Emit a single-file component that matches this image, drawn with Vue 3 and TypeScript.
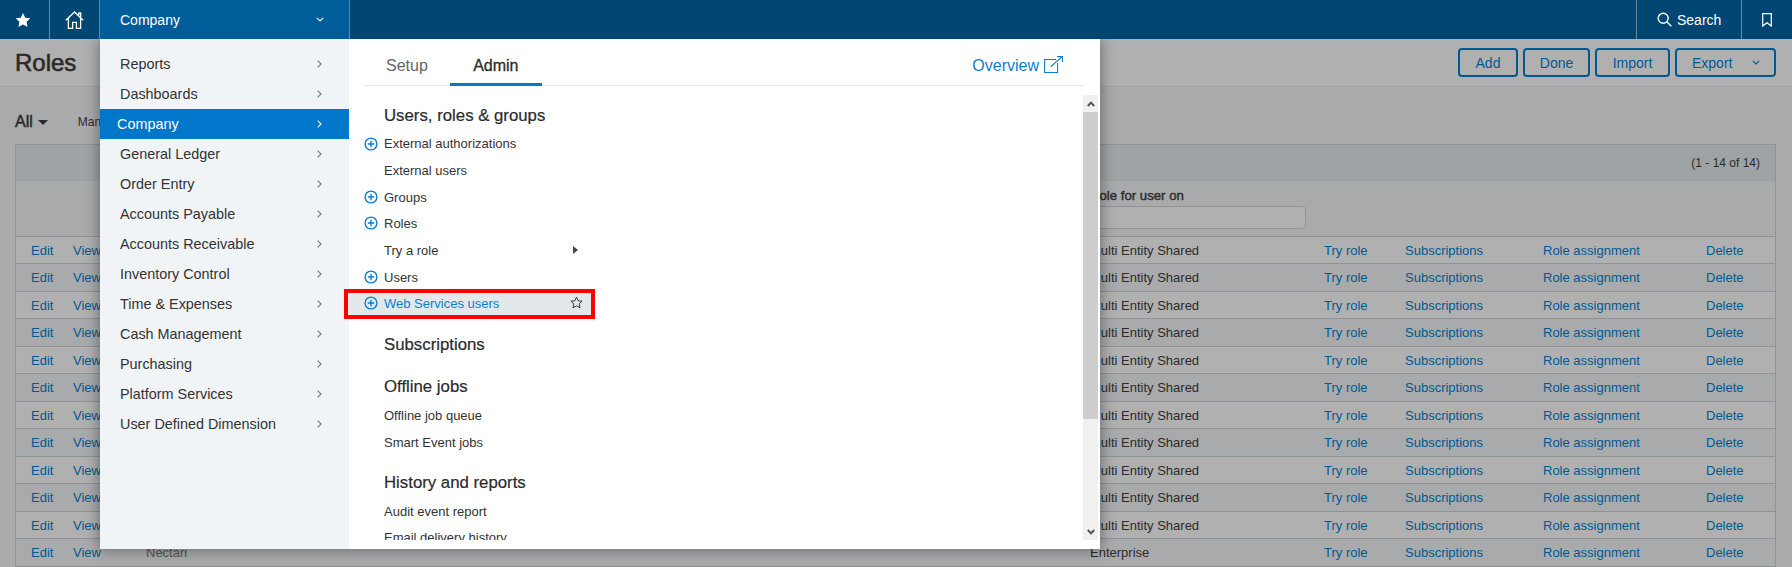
<script setup lang="ts">
const leftItems: string[] = ['Reports', 'Dashboards', 'Company', 'General Ledger', 'Order Entry', 'Accounts Payable', 'Accounts Receivable', 'Inventory Control', 'Time & Expenses', 'Cash Management', 'Purchasing', 'Platform Services', 'User Defined Dimension']
const userLinks = [
  { label: 'External authorizations', plus: true },
  { label: 'External users', plus: false },
  { label: 'Groups', plus: true },
  { label: 'Roles', plus: true },
  { label: 'Try a role', plus: false, arrow: true },
  { label: 'Users', plus: true },
]
const rows = Array.from({ length: 12 }, (_, i) => ({
  name: i === 11 ? 'Nectari' : '',
  type: i === 11 ? 'Enterprise' : 'Multi Entity Shared',
}))
</script>

<template>
  <div class="page">
    <header class="topbar">
      <a class="tb-icon tb-star" aria-label="Favorites">
        <svg width="16" height="16" viewBox="0 0 24 24"><path fill="#fff" d="M12 1.5l3.3 7 7.7 1-5.6 5.3 1.4 7.7-6.8-3.8-6.8 3.8 1.4-7.7L1 9.5l7.7-1z"/></svg>
      </a>
      <a class="tb-icon" aria-label="Home">
        <svg width="19" height="18" viewBox="0 0 19 18" fill="none" stroke="#fff" stroke-width="1.3"><path d="M.8 9.2L9.5 1l8.7 8.2M3.4 7.2v10.1h4.2v-6h3.8v6h4.2V7.2M13.8 4.2V1.8h1.9v4.2"/></svg>
      </a>
      <a class="tb-company">
        <span>Company</span>
        <svg width="8" height="5" viewBox="0 0 8 5" fill="none" stroke="#fff" stroke-width="1.2"><path d="M.8.8L4 4 7.2.8"/></svg>
      </a>
      <div class="tb-fill"></div>
      <a class="tb-search">
        <svg width="15" height="15" viewBox="0 0 15 15" fill="none" stroke="#fff" stroke-width="1.4"><circle cx="6.2" cy="6.2" r="5"/><path d="M9.8 9.8L14.3 14.3"/></svg>
        <span>Search</span>
      </a>
      <a class="tb-mark" aria-label="Bookmarks">
        <svg width="10" height="14" viewBox="0 0 10 14" fill="none" stroke="#fff" stroke-width="1.2"><path d="M.7.7h8.6v12.4L5 9.8.7 13.1z"/></svg>
      </a>
    </header>

    <section class="titlebar">
      <h1>Roles</h1>
      <div class="actions">
        <button class="btn w-add">Add</button>
        <button class="btn w-done">Done</button>
        <button class="btn w-import">Import</button>
        <button class="btn w-export">
          <span>Export</span>
          <svg width="8" height="5" viewBox="0 0 8 5" fill="none" stroke="#005a92" stroke-width="1.2"><path d="M.8.8L4 4 7.2.8"/></svg>
        </button>
      </div>
    </section>

    <section class="filters">
      <span class="all">All</span><i class="caret"></i>
      <span class="manage">Man</span>
    </section>

    <section class="grid">
      <div class="band"><span>(1 - 14 of 14)</span></div>
      <div class="heads">
        <div class="head-cell">
          <b>Role for user on</b>
          <div class="filter-input"></div>
        </div>
      </div>
      <div v-for="(r, i) in rows" :key="i" class="row" :class="{ alt: i % 2 === 1 }">
        <a>Edit</a>
        <a>View</a>
        <span class="name">{{ r.name }}</span>
        <span>{{ r.type }}</span>
        <a>Try role</a>
        <a>Subscriptions</a>
        <a>Role assignment</a>
        <a>Delete</a>
      </div>
    </section>

    <nav class="menu">
      <ul class="menu-left">
        <li v-for="item in leftItems" :key="item" :class="{ active: item === 'Company' }">
          <span>{{ item }}</span>
          <svg width="5" height="8" viewBox="0 0 5 8" fill="none" stroke="currentColor" stroke-width="1.1"><path d="M.7.7L4 4 .7 7.3"/></svg>
        </li>
      </ul>
      <div class="menu-right">
        <div class="tabs">
          <a class="tab">Setup</a>
          <a class="tab on">Admin</a>
          <a class="overview">
            <span>Overview</span>
            <svg width="19" height="17" viewBox="0 0 19 17" fill="none" stroke="#0b7ed0" stroke-width="1.1"><path d="M12 3.5H.6v13h13V7M7 10.5L18 .7M13 .6h5.4V6"/></svg>
          </a>
        </div>
        <div class="scroller">
          <div class="scroll-body">
            <h3 class="first">Users, roles &amp; groups</h3>
            <a v-for="l in userLinks" :key="l.label" class="link">
              <svg v-if="l.plus" class="plus" width="14" height="14" viewBox="0 0 14 14" fill="none" stroke="#0b7ed0" stroke-width="1.4"><circle cx="7" cy="7" r="5.9"/><path d="M3.8 7h6.4M7 3.8v6.4"/></svg>
              <span>{{ l.label }}</span>
              <i v-if="l.arrow" class="arrow"></i>
            </a>
            <a class="link hot">
              <svg class="plus" width="14" height="14" viewBox="0 0 14 14" fill="none" stroke="#0b7ed0" stroke-width="1.4"><circle cx="7" cy="7" r="5.9"/><path d="M3.8 7h6.4M7 3.8v6.4"/></svg>
              <span>Web Services users</span>
              <svg class="star" width="13" height="13" viewBox="0 0 24 24" fill="none" stroke="#333" stroke-width="1.8"><path d="M12 2l3 6.8 7.4.8-5.5 5 1.6 7.3L12 18.2l-6.5 3.7 1.6-7.3-5.5-5 7.4-.8z"/></svg>
            </a>
            <h3 class="sub">Subscriptions</h3>
            <h3 class="off">Offline jobs</h3>
            <a class="link">Offline job queue</a>
            <a class="link">Smart Event jobs</a>
            <h3 class="hist">History and reports</h3>
            <a class="link">Audit event report</a>
            <a class="link">Email delivery history</a>
          </div>
          <div class="sbar">
            <span class="sb-btn"><svg width="8" height="6" viewBox="0 0 8 6" fill="none" stroke="#555" stroke-width="2"><path d="M.8 5L4 1.6 7.2 5"/></svg></span>
            <span class="sb-thumb"></span>
            <span class="sb-track"></span>
            <span class="sb-btn"><svg width="8" height="6" viewBox="0 0 8 6" fill="none" stroke="#555" stroke-width="2"><path d="M.8 1L4 4.4 7.2 1"/></svg></span>
          </div>
        </div>
      </div>
      <div class="annotation"></div>
    </nav>
  </div>
</template>

<style>
html, body { margin: 0; background: #a9aaac; overflow: hidden; }
</style>

<style scoped>
.page {
  position: relative;
  height: 567px;
  overflow: hidden;
  font-family: "Liberation Sans", Arial, sans-serif;
  font-size: 13px;
  color: #2b2b2b;
  background: #a9aaac;
}
a { color: inherit; text-decoration: none; }
.topbar { display: flex; height: 39px; background: #004672; color: #fff; position: relative; z-index: 3; }
.tb-icon { width: 49px; display: flex; align-items: center; justify-content: center; border-right: 1px solid #5e8aa8; }
.tb-star { box-sizing: border-box; width: 50px; padding-right: 3px; }
.tb-company {
  width: 250px; padding: 0 25px 0 20px; box-sizing: border-box; display: flex; align-items: center; justify-content: space-between;
  background: #005d99; border-right: 1px solid #5e8aa8; font-size: 14px;
}
.tb-fill { flex: 1; }
.tb-search { width: 105px; box-sizing: border-box; padding-left: 20px; display: flex; align-items: center; gap: 5px; border-left: 1px solid #5e8aa8; font-size: 14px; }
.tb-mark { width: 51px; box-sizing: border-box; padding-left: 20px; display: flex; align-items: center; border-left: 1px solid #5e8aa8; }

.titlebar { height: 48px; box-sizing: border-box; border-bottom: 1px solid #9ea3a5; display: flex; align-items: center; justify-content: space-between; padding: 0 16px 0 15px; background: #b0b0b0; }
h1 { margin: 0; font-size: 24px; font-weight: 400; color: #2a2a2a; -webkit-text-stroke: .6px #2a2a2a; }
.actions { display: flex; gap: 5px; }
.btn { height: 29px; padding: 0; background: transparent; border: 2px solid #005a92; border-radius: 4px; color: #005a92; font: 14px "Liberation Sans", Arial, sans-serif; box-sizing: border-box; }
.w-add { width: 60px; }
.w-done { width: 67px; }
.w-import { width: 75px; }
.w-export { width: 101px; display: flex; align-items: center; justify-content: space-between; padding: 0 14px 0 15px; }

.filters { height: 57px; box-sizing: border-box; padding: 26px 0 0 15px; display: flex; align-items: flex-start; }
.all { font-size: 16px; line-height: 18px; -webkit-text-stroke: .5px #2a2a2a; }
.caret { width: 0; height: 0; margin: 7px 0 0 5px; border: 5px solid transparent; border-top: 5px solid #2a2a2a; border-bottom: 0; }
.manage { margin-left: 30px; font-size: 12px; line-height: 18px; }

.grid { margin: 0 16px 0 15px; border-left: 1px solid #8e9396; border-right: 1px solid #8e9396; border-top: 1px solid #8e9396; }
.band { height: 36px; background: #9ea3a5; display: flex; align-items: center; justify-content: flex-end; padding-right: 15px; font-size: 12px; }
.heads { height: 55.5px; box-sizing: border-box; border-bottom: 1px solid #8e9396; padding: 7px 0 0 1074px; }
.head-cell b { display: block; font-size: 13.2px; line-height: 16px; font-weight: 400; -webkit-text-stroke: .4px #2b2b2b; }
.filter-input { width: 216px; height: 23px; margin-top: 2px; box-sizing: border-box; border: 1px solid #909597; border-radius: 4px; background: #b0b0b0; }
.row { display: grid; grid-template-columns: 42px 58px 959px 234px 81px 138px 163px 70px; height: 27.5px; box-sizing: border-box; align-items: center; padding: 1px 0 0 15px; background: #b0b0b0; border-bottom: 1px solid #8e9396; }
.row.alt { background: #a9aaac; }
.row a { color: #005a92; }
.row .name { color: #555; padding-left: 15px; }

.menu { position: absolute; left: 100px; top: 39px; width: 1000px; height: 510px; display: flex; background: #fff; box-shadow: 0 0 14px rgba(0, 0, 0, .45); z-index: 2; }
.menu-left { width: 249px; margin: 0; padding: 10px 0 0; list-style: none; background: #f0f4f6; font-size: 14.4px; color: #333; flex: none; }
.menu-left li { height: 30px; display: flex; align-items: center; justify-content: space-between; padding: 0 27px 0 20px; color: #333; }
.menu-left li svg { color: #777; }
.menu-left li.active { background: #0077cb; color: #fff; padding-left: 17px; }
.menu-left li.active svg { color: #fff; }
.menu-right { flex: 1; display: flex; flex-direction: column; min-width: 0; }
.tabs { display: flex; height: 47px; margin: 0 16px 0 15px; box-sizing: border-box; border-bottom: 1px solid #e6e8ea; align-items: stretch; }
.tab { box-sizing: border-box; height: 47px; padding-top: 18px; font-size: 16px; color: #666; margin-right: 22px; margin-left: 22px; }
.tab.on { color: #2b2b2b; border-bottom: 3px solid #0077cb; -webkit-text-stroke: .3px #2b2b2b; width: 92px; text-align: center; margin: 0; }
.overview { margin-left: auto; margin-right: 21px; padding-top: 18px; display: flex; gap: 5px; font-size: 16px; color: #0b7ed0; align-items: flex-start; }
.overview svg { margin-top: -1px; }
.scroller { flex: 1; display: flex; min-height: 0; padding: 9px 2px 9px 0; }
.scroll-body { flex: 1; overflow: hidden; padding: 11px 0 0; box-sizing: border-box; }
.sbar { width: 15px; display: flex; flex-direction: column; background: #f0f0f0; }
.sb-btn { height: 17px; display: flex; align-items: center; justify-content: center; flex: none; }
.sb-thumb { height: 307px; background: #cdcdcd; flex: none; }
.sb-track { flex: 1; }
h3 { margin: 0 0 6px; padding-left: 35px; font-size: 16.8px; font-weight: 400; line-height: 20px; color: #2b2b2b; -webkit-text-stroke: .2px #2b2b2b; }
h3.first { margin-bottom: 4.5px; }
h3.sub { margin: 17.5px 0 0; }
h3.off { margin-top: 22px; }
h3.hist { margin: 17px 0 5px; }
.link { display: flex; align-items: center; width: 243px; box-sizing: border-box; height: 26.67px; padding-left: 35px; position: relative; color: #333; }
.plus { position: absolute; left: 15px; top: 6px; }
.arrow { position: absolute; left: 224px; top: 9px; width: 0; height: 0; border-left: 5px solid #444; border-top: 4px solid transparent; border-bottom: 4px solid transparent; }
.hot { background: #e3e9eb; color: #0b7ed0; }
.star { position: absolute; left: 221px; top: 6px; }
.annotation { position: absolute; left: 244px; top: 250px; width: 251px; height: 30px; box-sizing: border-box; border: 4px solid #f00; pointer-events: none; }
</style>
